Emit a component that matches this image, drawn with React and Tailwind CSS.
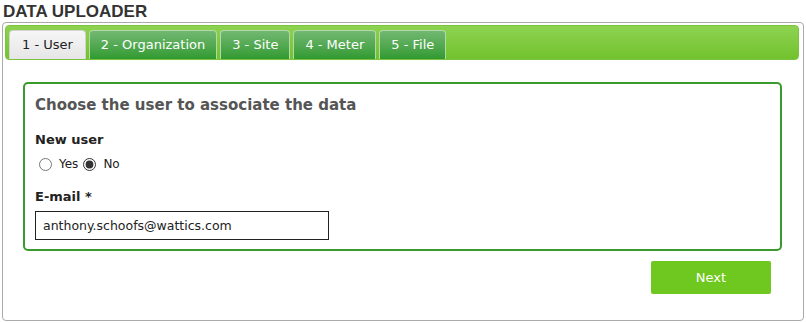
import React, { useState } from 'react';

const tabs = ['1 - User', '2 - Organization', '3 - Site', '4 - Meter', '5 - File'];

const App = () => {
  const [active, setActive] = useState(0);
  const [newUser, setNewUser] = useState('no');
  const [email, setEmail] = useState('anthony.schoofs@wattics.com');

  return (
    <div className="w-[806px] h-[323px] bg-white font-['DejaVu_Sans',sans-serif] text-[13px] text-[#222]">
      <h1 className="pl-[3px] pt-[3px] h-[22px] font-['Liberation_Sans',Arial,sans-serif] font-bold text-[17px] leading-[18px] text-[#333]">
        DATA UPLOADER
      </h1>

      <div className="mx-[2px] h-[299px] border border-[#aaa] rounded-[4px] p-[2px] flex flex-col">
        {/* tab strip */}
        <div className="h-[35px] mr-[2px] rounded-[4px] border border-[#7cc440] bg-gradient-to-b from-[#8dd350] to-[#72c22d] flex items-end gap-[3px] pl-[3px]">
          {tabs.map((t, i) => (
            <button
              key={t}
              type="button"
              onClick={() => setActive(i)}
              className={
                i === active
                  ? 'h-[29px] px-[12px] rounded-t-[4px] border border-b-0 border-[#d3d3d3] bg-gradient-to-b from-[#f6f6f6] to-[#e6e6e6] text-[#222] text-[13px]'
                  : 'h-[29px] px-[11px] rounded-t-[4px] border border-b-0 border-[#b5d8a8] bg-gradient-to-b from-[#72b872] to-[#2f9a2f] text-white text-[13px]'
              }
            >
              {t}
            </button>
          ))}
        </div>

        <div className="pt-[22px] pl-[18px] pr-[19px]">
          <div className="h-[169px] border-2 border-[#3a9a2e] rounded-[5px] pl-[10px] pt-[12px]">
            <h2 className="font-bold text-[15px] leading-[18px] text-[#555]">
              Choose the user to associate the data
            </h2>

            <div className="mt-[18px] font-bold text-[13px] leading-[16px]">New user</div>
            <div className="mt-[8px] flex items-center text-[12px] leading-[16px]">
              <label className="flex items-center">
                <input
                  type="radio"
                  name="newuser"
                  checked={newUser === 'yes'}
                  onChange={() => setNewUser('yes')}
                  className="m-0 ml-[4px] mr-[7px] w-[13px] h-[13px] accent-[#333]"
                />
                Yes
              </label>
              <label className="flex items-center ml-[5px]">
                <input
                  type="radio"
                  name="newuser"
                  checked={newUser === 'no'}
                  onChange={() => setNewUser('no')}
                  className="m-0 mr-[7px] w-[13px] h-[13px] accent-[#333]"
                />
                No
              </label>
            </div>

            <div className="mt-[17px] font-bold text-[13px] leading-[16px]">E-mail *</div>
            <input
              type="text"
              value={email}
              onChange={(e) => setEmail(e.target.value)}
              className="mt-[6px] block w-[294px] h-[29px] border border-[#222] px-[7px] text-[12.5px] text-[#222] outline-none"
            />
          </div>
        </div>

        <div className="flex justify-end pr-[30px] pt-[10px]">
          <button
            type="button"
            className="w-[120px] h-[33px] rounded-[2px] bg-[#6fc81f] text-white text-[13px]"
          >
            Next
          </button>
        </div>
      </div>
    </div>
  );
};

export default App;
